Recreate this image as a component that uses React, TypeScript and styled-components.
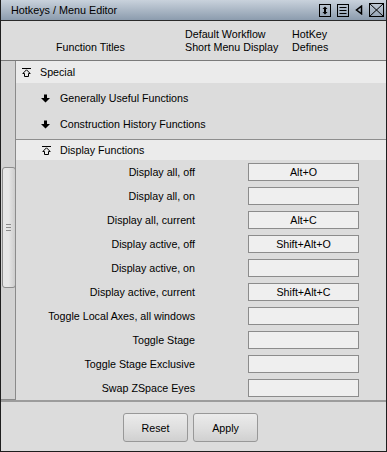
import React from "react";
import styled, { createGlobalStyle } from "styled-components";

const GlobalStyle = createGlobalStyle`
  html, body {
    margin: 0;
    padding: 0;
    background: #dcdcdc;
  }
  body {
    font-family: "Liberation Sans", Arial, sans-serif;
    font-size: 10.7px;
    color: #000;
  }
`;

const Window = styled.div`
  width: 387px;
  height: 452px;
  box-sizing: border-box;
  display: flex;
  flex-direction: column;
  background: #dcdcdc;
  border-left: 1px solid #1e1e1e;
  border-right: 1px solid #1e1e1e;
  border-bottom: 1px solid #1e1e1e;
`;

const TitleBar = styled.div`
  height: 20px;
  flex-shrink: 0;
  display: flex;
  align-items: center;
  padding-left: 10px;
  padding-right: 2px;
  background: linear-gradient(#c9d2dc, #8c9cae);
  border-bottom: 1px solid #2a2a2a;
  font-size: 10.8px;
`;

const Title = styled.div`
  flex: 1;
`;

const TitleIcons = styled.div`
  display: flex;
  align-items: center;
  gap: 6px;
`;

const Header = styled.div`
  height: 40px;
  flex-shrink: 0;
  display: flex;
  align-items: flex-end;
  padding-left: 55px;
  padding-bottom: 6px;
  box-sizing: border-box;
  border-bottom: 1px solid #7a7a7a;
  line-height: 13px;
`;

const HeaderCol = styled.div<{ $w?: number }>`
  width: ${(p) => (p.$w ? p.$w + "px" : "auto")};
  flex-shrink: 0;
`;

const Body = styled.div`
  height: 339px;
  flex-shrink: 0;
  display: flex;
`;

const ScrollTrack = styled.div`
  width: 15px;
  flex-shrink: 0;
  background: #d2d2d2;
  border-right: 1px solid #8a8a8a;
  border-bottom: 1px solid #8a8a8a;
  box-sizing: border-box;
  padding-top: 106px;
  padding-left: 1px;
`;

const Thumb = styled.div`
  width: 14px;
  height: 121px;
  box-sizing: border-box;
  border: 1px solid #8c8c8c;
  border-radius: 3px;
  background: linear-gradient(90deg, #e6e6e6 0%, #e6e6e6 45%, #cdcdcd 100%);
  display: flex;
  align-items: center;
  justify-content: center;
`;

const Grip = styled.div`
  width: 5px;
  height: 7px;
  margin-left: -1px;
  border-top: 1px solid #8a8a8a;
  border-bottom: 1px solid #8a8a8a;
  box-sizing: border-box;
  display: flex;
  align-items: center;
  &::after {
    content: "";
    display: block;
    width: 100%;
    height: 1px;
    background: #8a8a8a;
  }
`;

const Content = styled.div`
  flex: 1;
  display: flex;
  flex-direction: column;
`;

const SectionRow = styled.div<{ $indent: number; $h: number }>`
  height: ${(p) => p.$h}px;
  display: flex;
  align-items: center;
  padding-left: ${(p) => p.$indent}px;
  background: #ebebeb;
  gap: 9px;
`;

const Group = styled.div`
  padding: 2px 0;
  border-bottom: 1px solid #8e8e8e;
`;

const GroupRow = styled.div`
  height: 26px;
  display: flex;
  align-items: center;
  padding-left: 25px;
  gap: 10px;
`;

const ItemRow = styled.div`
  height: 24px;
  display: flex;
  align-items: center;
`;

const ItemLabel = styled.div`
  width: 179px;
  text-align: right;
`;

const KeyBox = styled.div`
  width: 111px;
  height: 18px;
  margin-left: 53px;
  box-sizing: border-box;
  border: 1px solid #8c8c8c;
  background: #efefef;
  display: flex;
  align-items: center;
  justify-content: center;
`;

const Footer = styled.div`
  flex: 1;
  border-top: 2px solid #9c9c9c;
  display: flex;
  gap: 5px;
  padding-top: 11px;
  padding-left: 122px;
  box-sizing: border-box;
`;

const Button = styled.button`
  width: 65px;
  height: 29px;
  box-sizing: border-box;
  border: 1px solid #989898;
  border-radius: 3px;
  background: linear-gradient(#ebebeb, #dedede 55%, #d0d0d0);
  font-family: "Liberation Sans", Arial, sans-serif;
  font-size: 10.7px;
  color: #000;
  padding: 0;
`;

const CollapseIcon = () => (
  <svg width="9" height="9" viewBox="0 0 9 9">
    <line x1="0" y1="0.5" x2="9" y2="0.5" stroke="#000" />
    <path d="M4.5 1.8 L8.2 5.5 L6.5 5.5 L6.5 8.5 L2.5 8.5 L2.5 5.5 L0.8 5.5 Z" fill="none" stroke="#000" />
  </svg>
);

const DownIcon = () => (
  <svg width="9" height="9" viewBox="0 0 9 9">
    <path d="M3 0.5 H6 V4 H9 L4.5 8.5 L0 4 H3 Z" fill="#000" />
  </svg>
);

const items = [
  { label: "Display all, off", key: "Alt+O" },
  { label: "Display all, on", key: "" },
  { label: "Display all, current", key: "Alt+C" },
  { label: "Display active, off", key: "Shift+Alt+O" },
  { label: "Display active, on", key: "" },
  { label: "Display active, current", key: "Shift+Alt+C" },
  { label: "Toggle Local Axes, all windows", key: "" },
  { label: "Toggle Stage", key: "" },
  { label: "Toggle Stage Exclusive", key: "" },
  { label: "Swap ZSpace Eyes", key: "" },
];

const App = () => {
  return (
    <>
      <GlobalStyle />
      <Window>
        <TitleBar>
          <Title>Hotkeys / Menu Editor</Title>
          <TitleIcons>
            <svg width="12" height="13" viewBox="0 0 12 13">
              <rect x="0.5" y="0.5" width="11" height="12" fill="none" stroke="#000" />
              <path d="M6 2.5 L8.5 5 H7 V8 H8.5 L6 10.5 L3.5 8 H5 V5 H3.5 Z" fill="#000" />
            </svg>
            <svg width="12" height="13" viewBox="0 0 12 13">
              <rect x="0.5" y="0.5" width="11" height="12" fill="none" stroke="#000" />
              <line x1="2.5" y1="3.5" x2="9.5" y2="3.5" stroke="#000" />
              <line x1="2.5" y1="6.5" x2="9.5" y2="6.5" stroke="#000" />
              <line x1="2.5" y1="9.5" x2="9.5" y2="9.5" stroke="#000" />
            </svg>
            <svg width="8" height="10" viewBox="0 0 8 10">
              <path d="M6.5 1.2 L1.5 5 L6.5 8.8 Z" fill="none" stroke="#000" strokeWidth="1.5" />
            </svg>
            <svg width="15" height="14" viewBox="0 0 15 14">
              <rect x="0.5" y="0.5" width="14" height="13" fill="none" stroke="#000" />
              <line x1="0.5" y1="0.5" x2="14.5" y2="13.5" stroke="#000" />
              <line x1="14.5" y1="0.5" x2="0.5" y2="13.5" stroke="#000" />
            </svg>
          </TitleIcons>
        </TitleBar>

        <Header>
          <HeaderCol $w={129}>Function Titles</HeaderCol>
          <HeaderCol $w={107}>
            Default Workflow
            <br />
            Short Menu Display
          </HeaderCol>
          <HeaderCol>
            HotKey
            <br />
            Defines
          </HeaderCol>
        </Header>

        <Body>
          <ScrollTrack>
            <Thumb>
              <Grip />
            </Thumb>
          </ScrollTrack>
          <Content>
            <SectionRow $indent={6} $h={22}>
              <CollapseIcon />
              Special
            </SectionRow>
            <Group>
              <GroupRow>
                <DownIcon />
                Generally Useful Functions
              </GroupRow>
              <GroupRow>
                <DownIcon />
                Construction History Functions
              </GroupRow>
            </Group>
            <SectionRow $indent={26} $h={20}>
              <CollapseIcon />
              Display Functions
            </SectionRow>
            {items.map((each) => (
              <ItemRow key={each.label}>
                <ItemLabel>{each.label}</ItemLabel>
                <KeyBox>{each.key}</KeyBox>
              </ItemRow>
            ))}
          </Content>
        </Body>

        <Footer>
          <Button type="button">Reset</Button>
          <Button type="button">Apply</Button>
        </Footer>
      </Window>
    </>
  );
};

export default App;
